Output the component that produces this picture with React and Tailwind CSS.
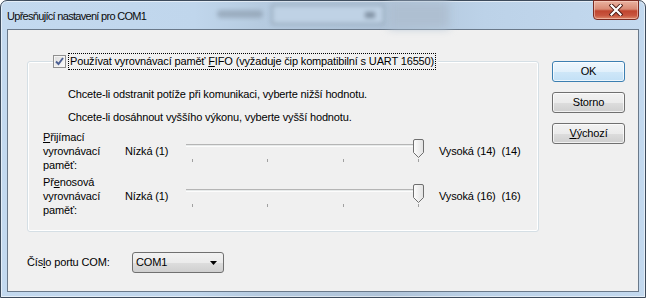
import React from "react";

const btn =
  "w-[73px] h-[21px] rounded-[3px] border flex items-center justify-center shadow-[inset_0_0_0_1px_rgba(255,255,255,0.7)]";
const grey =
  "border-[#707070] bg-[linear-gradient(180deg,#f2f2f2_0%,#ebebeb_50%,#dddddd_51%,#cfcfcf_100%)]";
const blue =
  "border-[#3c7fb1] bg-[linear-gradient(180deg,#eef7fd_0%,#e1f0fb_50%,#cfe7f8_51%,#c2e0f6_100%)]";

function Thumb() {
  return (
    <svg width="11" height="19" viewBox="0 0 11 19" className="absolute left-[227px] top-0">
      <defs>
        <linearGradient id="tg" x1="0" y1="0" x2="1" y2="0">
          <stop offset="0" stopColor="#fdfdfd" />
          <stop offset="1" stopColor="#e2e2e2" />
        </linearGradient>
      </defs>
      <path
        d="M0.5 2 Q0.5 0.5 2 0.5 H9 Q10.5 0.5 10.5 2 V13.5 L5.5 18.5 L0.5 13.5 Z"
        fill="url(#tg)"
        stroke="#6f6f6f"
      />
    </svg>
  );
}

function Slider() {
  return (
    <div className="w-[238px] pt-[9px]">
      <div className="relative h-[19px]">
        <div className="absolute left-0 right-[4px] top-[5px] h-[3px] border-t border-[#b5b5b5] bg-[#e7eaea] border-b border-b-[#fcfcfc]" />
        <Thumb />
      </div>
      <div className="flex justify-between pl-[6px] pr-[5px] mt-[1px]">
        <span className="w-px h-[3px] bg-[#a0a0a0]" />
        <span className="w-px h-[3px] bg-[#a0a0a0]" />
        <span className="w-px h-[3px] bg-[#a0a0a0]" />
        <span className="w-px h-[3px] bg-[#a0a0a0]" />
      </div>
    </div>
  );
}

function SliderRow({ first, high }) {
  return (
    <div className="flex ml-[15px]">
      <div className="w-[82px] leading-[14px]">
        {first}
        <br />
        vyrovnávací
        <br />
        paměť:
      </div>
      <div className="w-[61px] leading-[14px] pt-[14px]">Nízká (1)</div>
      <Slider />
      <div className="ml-[15px] leading-[14px] pt-[14px] whitespace-pre">{high}</div>
    </div>
  );
}

export default function App() {
  return (
    <div
      className="w-[646px] h-[298px] overflow-hidden text-[11px] text-black tracking-[-0.15px]"
      style={{ fontFamily: '"Liberation Sans", Arial, sans-serif' }}
    >
      <div className="w-full h-full flex flex-col rounded-t-[7px] border border-[#3d4b5c] bg-[linear-gradient(90deg,#c3d9ef_0%,#c0d6ec_30%,#b6cbe0_40%,#b0c4d9_60%,#bcd2e8_75%,#c3d9ef_100%)] shadow-[inset_0_0_0_1px_rgba(255,255,255,0.55)]">
        <div className="h-[28px] flex items-start shrink-0">
          <div className="w-[200px] pl-[6px] pt-[7px] tracking-[-0.7px] text-[#0b0b0b]">
            Upřesňující nastavení pro COM1
          </div>
          <div className="ml-[16px] mt-[9px] w-[46px] h-[8px] rounded-full bg-[#8797a8] opacity-60 blur-[2px]" />
          <div className="ml-[8px] mt-[3px] w-[114px] h-[21px] rounded-[2px] border-2 border-[#94a6b9] bg-[#bfd2e5] blur-[2px] flex items-center justify-end pr-[8px]">
            <div className="w-[10px] h-[6px] bg-[#7f90a2]" />
          </div>
          <div className="ml-[4px] mt-[1px] w-[60px] h-[26px] bg-[#aebfd1] blur-[4px]" />
          <div className="ml-auto mr-[6px] -mt-px w-[46px] h-[20px] rounded-b-[4px] border border-[#7b2b22] bg-[linear-gradient(180deg,#eab2a0_0%,#d98a75_45%,#c0452f_55%,#c8553f_80%,#dc8a6c_100%)] shadow-[inset_0_0_0_1px_rgba(255,220,210,0.5)] flex items-center justify-center">
            <svg width="14" height="12" viewBox="0 0 14 12">
              <path d="M2.5 1.5 L11.5 10.5 M11.5 1.5 L2.5 10.5" stroke="#4a1a14" strokeWidth="4" strokeLinecap="square" />
              <path d="M2.5 1.5 L11.5 10.5 M11.5 1.5 L2.5 10.5" stroke="#ffffff" strokeWidth="2.2" strokeLinecap="square" />
            </svg>
          </div>
        </div>

        <div className="flex-1 mx-[6px] mb-[5px] border border-[#6a798a] bg-[#f0f0f0] flex">
          <div className="pl-[19px] pt-[31px] flex flex-col">
            <div className="w-[512px] h-[171px] rounded-[3px] border border-[#d5dfe5] shadow-[inset_0_0_0_1px_#ffffff] flex flex-col">
              <div className="-mt-[9px] ml-[25px] h-[17px] flex items-center self-start bg-[#f0f0f0] pr-[2px]">
                <div className="w-[13px] h-[13px] border border-[#8f8f8f] bg-[linear-gradient(135deg,#dcdcdc_0%,#fbfbfb_100%)] shadow-[inset_0_0_0_1px_#f4f4f4] flex items-center justify-center">
                  <svg width="11" height="11" viewBox="0 0 11 11">
                    <path d="M2 5.5 L4.5 8 L9 2" fill="none" stroke="#4b5f93" strokeWidth="1.9" />
                  </svg>
                </div>
                <div className="ml-[2px] h-[17px] px-px flex items-center border border-dotted border-black whitespace-pre">
                  Používat vyrovnávací paměť <span className="underline underline-offset-[1px]">F</span>IFO (vyžaduje čip kompatibilní s UART 16550)
                </div>
              </div>
              <div className="ml-[40px] mt-[17px] leading-[14px]">
                Chcete-li odstranit potíže při komunikaci, vyberte nižší hodnotu.
              </div>
              <div className="ml-[40px] mt-[9px] leading-[14px]">
                Chcete-li dosáhnout vyššího výkonu, vyberte vyšší hodnotu.
              </div>
              <div className="mt-[6px]">
                <SliderRow
                  first={
                    <>
                      <span className="underline underline-offset-[1px]">P</span>řijímací
                    </>
                  }
                  high="Vysoká (14)  (14)"
                />
              </div>
              <div className="mt-[3px]">
                <SliderRow
                  first={
                    <>
                      Př<span className="underline underline-offset-[1px]">e</span>nosová
                    </>
                  }
                  high="Vysoká (16)  (16)"
                />
              </div>
            </div>

            <div className="mt-[20px] flex items-center">
              <div className="w-[105px]">
                Čís<span className="underline underline-offset-[1px]">l</span>o portu COM:
              </div>
              <div className={`w-[92px] h-[21px] rounded-[3px] border flex items-center pl-[3px] pr-[6px] ${grey}`}>
                <span>COM1</span>
                <svg width="7" height="4" viewBox="0 0 7 4" className="ml-auto">
                  <path d="M0 0 H7 L3.5 4 Z" fill="#000" />
                </svg>
              </div>
            </div>
          </div>

          <div className="ml-[13px] pt-[31px] flex flex-col gap-[10px]">
            <div className={`${btn} ${blue}`}>OK</div>
            <div className={`${btn} ${grey}`}>Storno</div>
            <div className={`${btn} ${grey}`}>
              <span className="underline underline-offset-[1px]">V</span>ýchozí
            </div>
          </div>
        </div>
      </div>
    </div>
  );
}
